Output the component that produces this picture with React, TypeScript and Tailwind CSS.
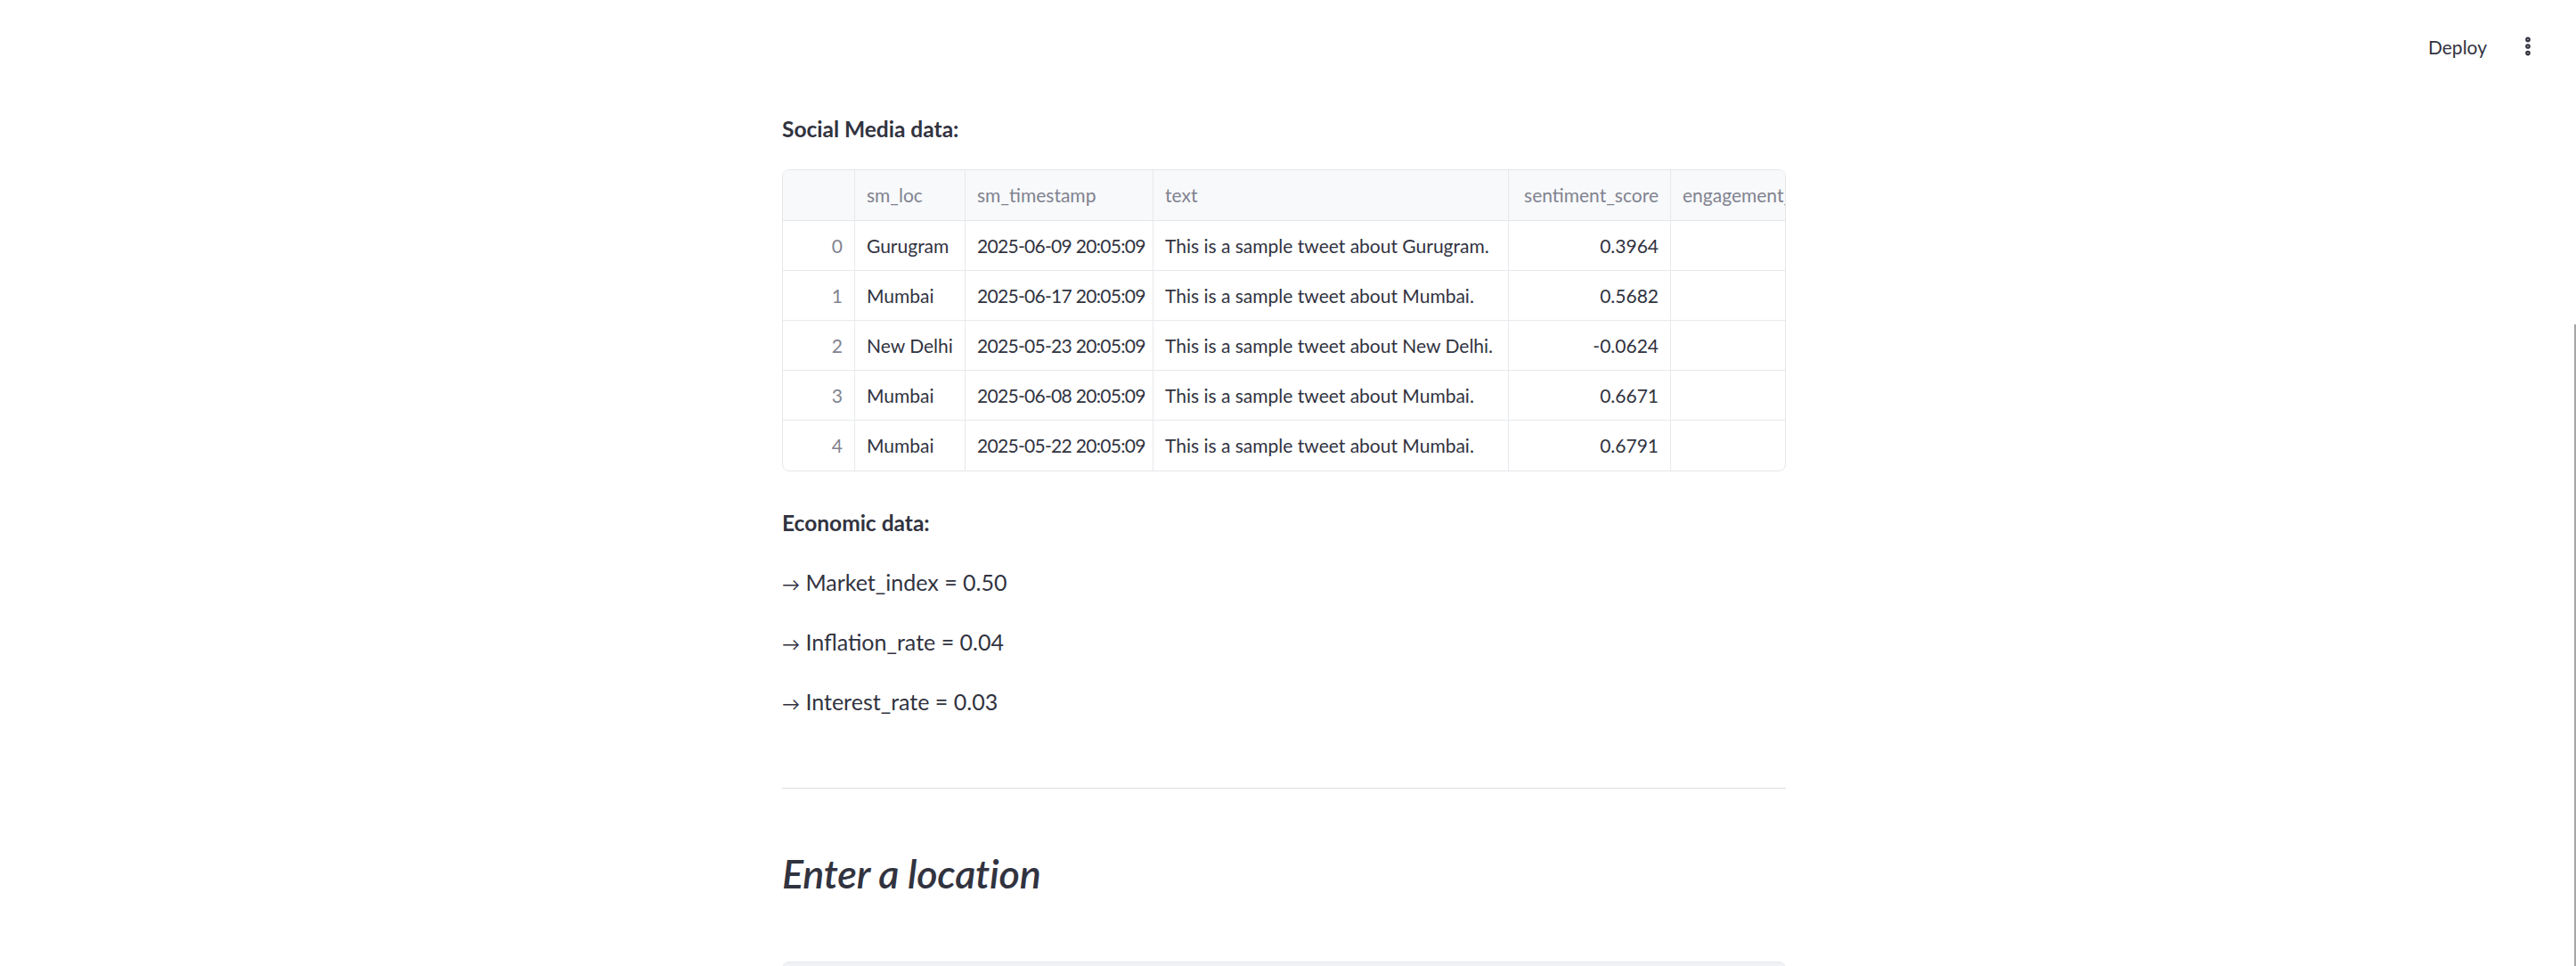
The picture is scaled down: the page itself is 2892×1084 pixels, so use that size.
import { EllipsisVertical } from 'lucide-react';

type Row = {
  idx: number;
  loc: string;
  ts: string;
  text: string;
  score: string;
};

const rows: Row[] = [
  { idx: 0, loc: 'Gurugram', ts: '2025-06-09 20:05:09', text: 'This is a sample tweet about Gurugram.', score: '0.3964' },
  { idx: 1, loc: 'Mumbai', ts: '2025-06-17 20:05:09', text: 'This is a sample tweet about Mumbai.', score: '0.5682' },
  { idx: 2, loc: 'New Delhi', ts: '2025-05-23 20:05:09', text: 'This is a sample tweet about New Delhi.', score: '-0.0624' },
  { idx: 3, loc: 'Mumbai', ts: '2025-06-08 20:05:09', text: 'This is a sample tweet about Mumbai.', score: '0.6671' },
  { idx: 4, loc: 'Mumbai', ts: '2025-05-22 20:05:09', text: 'This is a sample tweet about Mumbai.', score: '0.6791' },
];

const economic = [
  { name: 'Market_index', value: '0.50' },
  { name: 'Inflation_rate', value: '0.04' },
  { name: 'Interest_rate', value: '0.03' },
];

const cols = 'grid grid-cols-[81px_124px_211px_399px_182px_200px]';
const cell = 'flex items-center px-[13px] border-r border-[#e8e9ec] whitespace-nowrap overflow-hidden';

export default function App() {
  return (
    <div className="relative h-[1084px] overflow-hidden bg-white text-[#31333f] font-[Lato,'Noto_Sans',sans-serif]">
      {/* Header */}
      <header className="flex h-[104px] items-center justify-end pr-[41px]">
        <button className="text-[21px] leading-none text-[#31333f]">Deploy</button>
        <EllipsisVertical size={26} strokeWidth={3.2} className="ml-[33px] text-[#31333f]" />
      </header>

      {/* Main block */}
      <main className="ml-[878px] w-[1127px] pt-[20px]">
        <p className="text-[24.5px] leading-[41px] font-bold">Social Media data:</p>

        {/* Dataframe */}
        <div className="mt-[25px] overflow-hidden rounded-[8px] border border-[#e6e7ea] text-[21px]">
          <div className={`${cols} h-[57px] border-b border-[#e6e7ea] bg-[#f8f9fb] text-[#818390]`}>
            <div className={cell} />
            <div className={cell}>sm_loc</div>
            <div className={cell}>sm_timestamp</div>
            <div className={cell}>text</div>
            <div className={`${cell} justify-end`}>sentiment_score</div>
            <div className={cell}>engagement_count</div>
          </div>
          {rows.map((r, i) => (
            <div
              key={r.idx}
              className={`${cols} h-[56px] ${i < rows.length - 1 ? 'border-b border-[#e8e9ec]' : ''}`}
            >
              <div className={`${cell} justify-end text-[#818390]`}>{r.idx}</div>
              <div className={cell}>{r.loc}</div>
              <div className={`${cell} tracking-[-0.7px]`}>{r.ts}</div>
              <div className={cell}>{r.text}</div>
              <div className={`${cell} justify-end`}>{r.score}</div>
              <div className={cell} />
            </div>
          ))}
        </div>

        <p className="mt-[37px] mb-[26px] text-[24.5px] leading-[41px] font-bold">Economic data:</p>

        {economic.map((e) => (
          <p key={e.name} className="mb-[26px] h-[41px] text-[25px] leading-[41px]">
            <span className="text-[20px] leading-none">→</span> {e.name} = {e.value}
          </p>
        ))}

        <hr className="mt-[76px] border-0 border-t border-[#dcdde0]" />

        <h3 className="mt-[68px] text-[44.8px] leading-[54px] font-semibold italic tracking-[-0.2px]">
          Enter a location
        </h3>

        {/* Text input (cut off by the viewport) */}
        <div className="mt-[72px] h-[70px] rounded-[8px] border border-[#e7e8ee] bg-[#f0f2f6]" />
      </main>

      {/* Overlay scrollbar thumb */}
      <div className="absolute right-0 top-[364px] h-[720px] w-[2px] bg-[#a6a6a6]" />
    </div>
  );
}
